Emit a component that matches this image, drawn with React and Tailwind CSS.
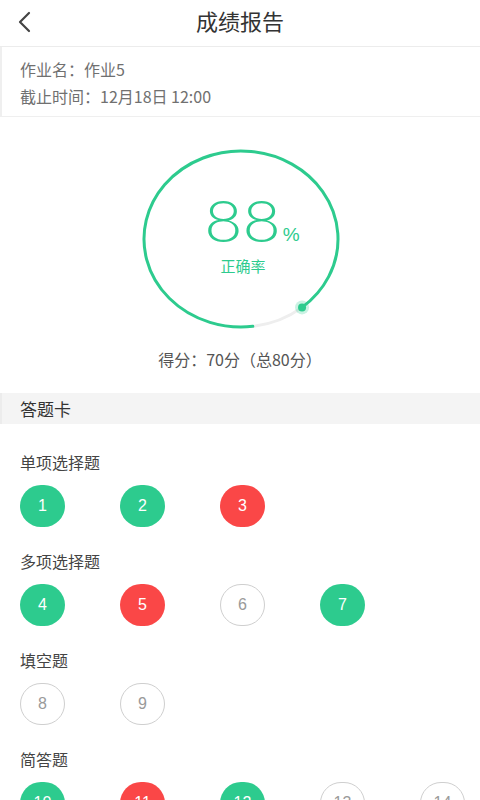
import React from "react";

const G = "#2dcb8e";

function Btn({ n, s }) {
  const cls =
    s === "g"
      ? "bg-[#2dcb8e] text-white"
      : s === "r"
      ? "bg-[#fa4747] text-white"
      : "border border-[#cfcfcf] text-[#9a9a9a] bg-white";
  return (
    <div
      className={
        "w-[45px] h-[42px] rounded-full flex items-center justify-center text-[16px] shrink-0 " +
        cls
      }
      style={{ fontFamily: '"Liberation Sans", sans-serif' }}
    >
      {n}
    </div>
  );
}

function Section({ title, items, first }) {
  return (
    <div className={first ? "pt-[28px]" : "pt-[24px]"}>
      <div className="px-[20px] text-[16px] leading-[20px] text-[#444]">{title}</div>
      <div className="mt-[13px] px-[20px] flex gap-[55px]">
        {items.map(([n, s]) => (
          <Btn key={n} n={n} s={s} />
        ))}
      </div>
    </div>
  );
}

export default function App() {
  const cx = 100,
    cy = 91,
    rx = 97,
    ry = 88;
  const pt = (deg) => {
    const r = (deg * Math.PI) / 180;
    return [cx + rx * Math.cos(r), cy + ry * Math.sin(r)];
  };
  const [sx, sy] = pt(83);
  const [ex, ey] = pt(51);
  return (
    <div
      className="w-[480px] bg-white"
      style={{ fontFamily: '"Noto Sans CJK SC", "Liberation Sans", sans-serif' }}
    >
      {/* header */}
      <div className="relative h-[47px] flex items-center justify-center border-b border-[#ececec]">
        <svg
          className="absolute left-[16px] top-[11px]"
          width="18"
          height="22"
          viewBox="0 0 18 22"
          fill="none"
        >
          <path d="M13 2 L4 11 L13 20" stroke="#444" strokeWidth="2.2" strokeLinecap="round" strokeLinejoin="round" />
        </svg>
        <div className="text-[22px] text-[#333] leading-none -translate-y-[3px]">成绩报告</div>
      </div>

      {/* info */}
      <div className="border-b border-l-2 border-[#efefef] px-[18px] pt-[9px] pb-[6px] text-[16px] leading-[27px] text-[#707070]">
        <div>作业名：作业5</div>
        <div>截止时间：12月18日 12:00</div>
      </div>

      {/* score circle */}
      <div className="pt-[31px] pb-[22px] flex flex-col items-center">
        <div className="relative w-[200px] h-[182px] translate-x-[1px]">
          <svg width="200" height="182" viewBox="0 0 200 182" fill="none">
            <path
              d={`M ${ex} ${ey} A ${rx} ${ry} 0 0 1 ${sx} ${sy}`}
              stroke="#eeeeee"
              strokeWidth="3"
            />
            <path
              d={`M ${sx} ${sy} A ${rx} ${ry} 0 1 1 ${ex} ${ey}`}
              stroke={G}
              strokeWidth="3"
              strokeLinecap="round"
            />
            <circle cx={ex} cy={ey} r="7" fill={G} opacity="0.25" />
            <circle cx={ex} cy={ey} r="4" fill={G} />
          </svg>
          <div className="absolute inset-0 flex flex-col items-center">
            <div className="mt-[44px] h-[50px] flex items-end translate-x-[11px]">
              <span
                className="text-[66px] leading-[50px] font-light text-[#2dcb8e] scale-y-[0.88] origin-bottom"
                style={{ fontFamily: 'Lato, "Liberation Sans", sans-serif' }}
              >
                88
              </span>
              <span
                className="text-[19px] leading-[18px] text-[#2dcb8e] ml-[2px] -mb-[2px]"
                style={{ fontFamily: '"Liberation Sans", sans-serif' }}
              >
                %
              </span>
            </div>
            <div className="mt-[14px] text-[15px] leading-[20px] text-[#2dcb8e] translate-x-[2px]">正确率</div>
          </div>
        </div>
        <div className="mt-[17px] text-[16px] leading-[24px] text-[#555]">得分：70分（总80分）</div>
      </div>

      {/* answer card */}
      <div className="h-[31px] bg-[#f4f4f4] border-l-2 border-[#ececec] flex items-center px-[18px] text-[17px] text-[#333]">
        答题卡
      </div>

      <Section
        first
        title="单项选择题"
        items={[
          [1, "g"],
          [2, "g"],
          [3, "r"],
        ]}
      />
      <Section
        title="多项选择题"
        items={[
          [4, "g"],
          [5, "r"],
          [6, "o"],
          [7, "g"],
        ]}
      />
      <Section
        title="填空题"
        items={[
          [8, "o"],
          [9, "o"],
        ]}
      />
      <Section
        title="简答题"
        items={[
          [10, "g"],
          [11, "r"],
          [12, "g"],
          [13, "o"],
          [14, "o"],
        ]}
      />
      <div className="h-[40px]" />
    </div>
  );
}
